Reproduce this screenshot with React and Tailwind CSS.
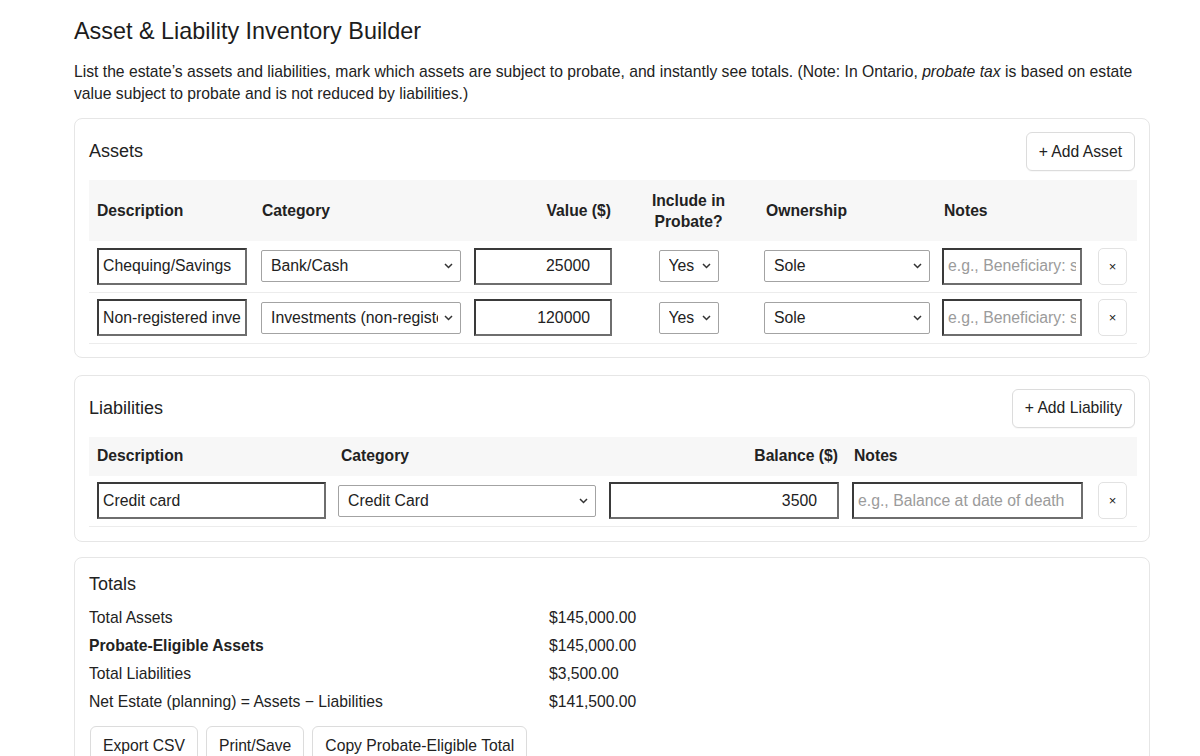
import React, { useState } from 'react';

const FONT = { fontFamily: 'Arial, "Liberation Sans", Helvetica, sans-serif' };

const inputCls =
  'w-full h-[37px] px-[4px] text-[15.8px] text-[#222] bg-white border-2 border-t-[#3a3a3a] border-l-[#3a3a3a] border-r-[#6e6e6e] border-b-[#6e6e6e] outline-none placeholder:text-[#9b9b9b]';

const btnCls =
  'h-[39px] px-[12px] text-[15.7px] text-[#222] bg-white border border-[#dcdcdc] rounded-[6px] shadow-[0_1px_1px_rgba(0,0,0,0.03)]';

const Chevron = () => (
  <svg className="absolute right-[8px] top-1/2 -translate-y-1/2 pointer-events-none" width="9" height="6" viewBox="0 0 9 6">
    <path d="M1 1l3.5 3.5L8 1" fill="none" stroke="#333" strokeWidth="1.5" />
  </svg>
);

const Select = ({ value, options, className = '' }) => (
  <div className={`relative ${className}`}>
    <select
      defaultValue={value}
      className="w-full h-[32px] pl-[9px] pr-[22px] text-[15.8px] text-[#222] bg-white border border-[#a3a3a3] rounded-[2px] appearance-none outline-none"
    >
      {options.map((o) => (
        <option key={o}>{o}</option>
      ))}
    </select>
    <Chevron />
  </div>
);

const DelButton = () => (
  <button className="w-[29px] h-[37px] flex items-center justify-center text-[13px] text-[#222] bg-white border border-[#e2e2e2] rounded-[5px]">
    ×
  </button>
);

const ASSET_CATS = ['Bank/Cash', 'Investments (non-registered)', 'Real Estate', 'Vehicle', 'Other'];
const OWNERSHIP = ['Sole', 'Joint', 'Beneficiary designated'];

const Card = ({ children, className = '' }) => (
  <div className={`border border-[#e6e6e6] rounded-[8px] bg-white px-[14px] pt-[13px] ${className}`}>{children}</div>
);

const CardHeader = ({ title, action }) => (
  <div className="flex items-center justify-between h-[39px]">
    <h2 className="text-[18px] text-[#222]">{title}</h2>
    {action && <button className={btnCls}>{action}</button>}
  </div>
);

const th = 'px-[8px] text-[15.7px] font-bold text-[#222] align-middle';

export default function App() {
  const [assets] = useState([
    { desc: 'Chequing/Savings', cat: 'Bank/Cash', value: '25000', probate: 'Yes', own: 'Sole' },
    { desc: 'Non-registered investments', cat: 'Investments (non-registered)', value: '120000', probate: 'Yes', own: 'Sole' },
  ]);

  return (
    <div className="min-h-screen bg-white text-[#222]" style={FONT}>
      <div className="ml-[74px] w-[1076px] pt-[17px]">
        <h1 className="text-[23.4px] leading-[28px] text-[#1c1c1c]">Asset &amp; Liability Inventory Builder</h1>
        <p className="mt-[16px] text-[15.7px] leading-[22px] text-[#222]">
          List the estate’s assets and liabilities, mark which assets are subject to probate, and instantly see totals. (Note: In Ontario, <em>probate tax</em> is based on estate value subject to probate and is not reduced by liabilities.)
        </p>

        {/* Assets */}
        <div className="mt-[13px]">
          <Card className="pb-[13px]">
            <CardHeader title="Assets" action="+ Add Asset" />
            <table className="mt-[9px] w-full table-fixed border-collapse">
              <colgroup>
                <col className="w-[165px]" />
                <col className="w-[212px]" />
                <col className="w-[153px]" />
                <col className="w-[139px]" />
                <col className="w-[178px]" />
                <col className="w-[155px]" />
                <col className="w-[46px]" />
              </colgroup>
              <thead>
                <tr className="bg-[#f7f7f7] h-[61px] leading-[21px]">
                  <th className={`${th} text-left`}>Description</th>
                  <th className={`${th} text-left`}>Category</th>
                  <th className={`${th} text-right`}>Value ($)</th>
                  <th className={`${th} text-center`}>Include in Probate?</th>
                  <th className={`${th} text-left`}>Ownership</th>
                  <th className={`${th} text-left`}>Notes</th>
                  <th />
                </tr>
              </thead>
              <tbody>
                {assets.map((a, i) => (
                  <tr key={i} className="h-[51px] border-b border-[#ececec]">
                    <td className="pl-[8px] pr-[7px]">
                      <input className={inputCls} defaultValue={a.desc} />
                    </td>
                    <td className="pl-[7px] pr-[5px]">
                      <Select value={a.cat} options={ASSET_CATS} />
                    </td>
                    <td className="pl-[8px] pr-[7px]">
                      <input className={`${inputCls} text-right pr-[20px]`} defaultValue={a.value} />
                    </td>
                    <td className="text-center">
                      <Select value={a.probate} options={['Yes', 'No']} className="w-[60px] mx-auto" />
                    </td>
                    <td className="px-[6px]">
                      <Select value={a.own} options={OWNERSHIP} />
                    </td>
                    <td className="pl-[6px] pr-[9px]">
                      <input className={inputCls} placeholder="e.g., Beneficiary: spouse" />
                    </td>
                    <td className="pl-[7px]">
                      <DelButton />
                    </td>
                  </tr>
                ))}
              </tbody>
            </table>
          </Card>
        </div>

        {/* Liabilities */}
        <div className="mt-[17px]">
          <Card className="pb-[14px]">
            <CardHeader title="Liabilities" action="+ Add Liability" />
            <table className="mt-[9px] w-full table-fixed border-collapse">
              <colgroup>
                <col className="w-[244px]" />
                <col className="w-[268px]" />
                <col className="w-[245px]" />
                <col className="w-[245px]" />
                <col className="w-[46px]" />
              </colgroup>
              <thead>
                <tr className="bg-[#f7f7f7] h-[39px]">
                  <th className={`${th} text-left`}>Description</th>
                  <th className={`${th} text-left`}>Category</th>
                  <th className={`${th} text-right`}>Balance ($)</th>
                  <th className={`${th} text-left`}>Notes</th>
                  <th />
                </tr>
              </thead>
              <tbody>
                <tr className="h-[51px] border-b border-[#ececec]">
                  <td className="pl-[8px] pr-[7px]">
                    <input className={inputCls} defaultValue="Credit card" />
                  </td>
                  <td className="pl-[5px] pr-[5px]">
                    <Select value="Credit Card" options={['Credit Card', 'Mortgage', 'Line of Credit', 'Loan', 'Other']} />
                  </td>
                  <td className="pl-[8px] pr-[7px]">
                    <input className={`${inputCls} text-right pr-[20px]`} defaultValue="3500" />
                  </td>
                  <td className="pl-[6px] pr-[8px]">
                    <input className={inputCls} placeholder="e.g., Balance at date of death" />
                  </td>
                  <td className="pl-[7px]">
                    <DelButton />
                  </td>
                </tr>
              </tbody>
            </table>
          </Card>
        </div>

        {/* Totals */}
        <div className="mt-[15px]">
          <Card className="pb-[14px]">
            <h2 className="text-[18px] leading-[27px] text-[#222]">Totals</h2>
            <div className="mt-[6px] grid grid-cols-[460px_auto] text-[15.7px] leading-[28px]">
              <div>Total Assets</div>
              <div>$145,000.00</div>
              <div className="font-bold">Probate-Eligible Assets</div>
              <div>$145,000.00</div>
              <div>Total Liabilities</div>
              <div>$3,500.00</div>
              <div>Net Estate (planning) = Assets − Liabilities</div>
              <div>$141,500.00</div>
            </div>
            <div className="mt-[10px] flex gap-[8px] pl-[1px]">
              <button className={`${btnCls} h-[40px]`}>Export CSV</button>
              <button className={`${btnCls} h-[40px]`}>Print/Save</button>
              <button className={`${btnCls} h-[40px]`}>Copy Probate-Eligible Total</button>
            </div>
          </Card>
        </div>
      </div>
    </div>
  );
}
